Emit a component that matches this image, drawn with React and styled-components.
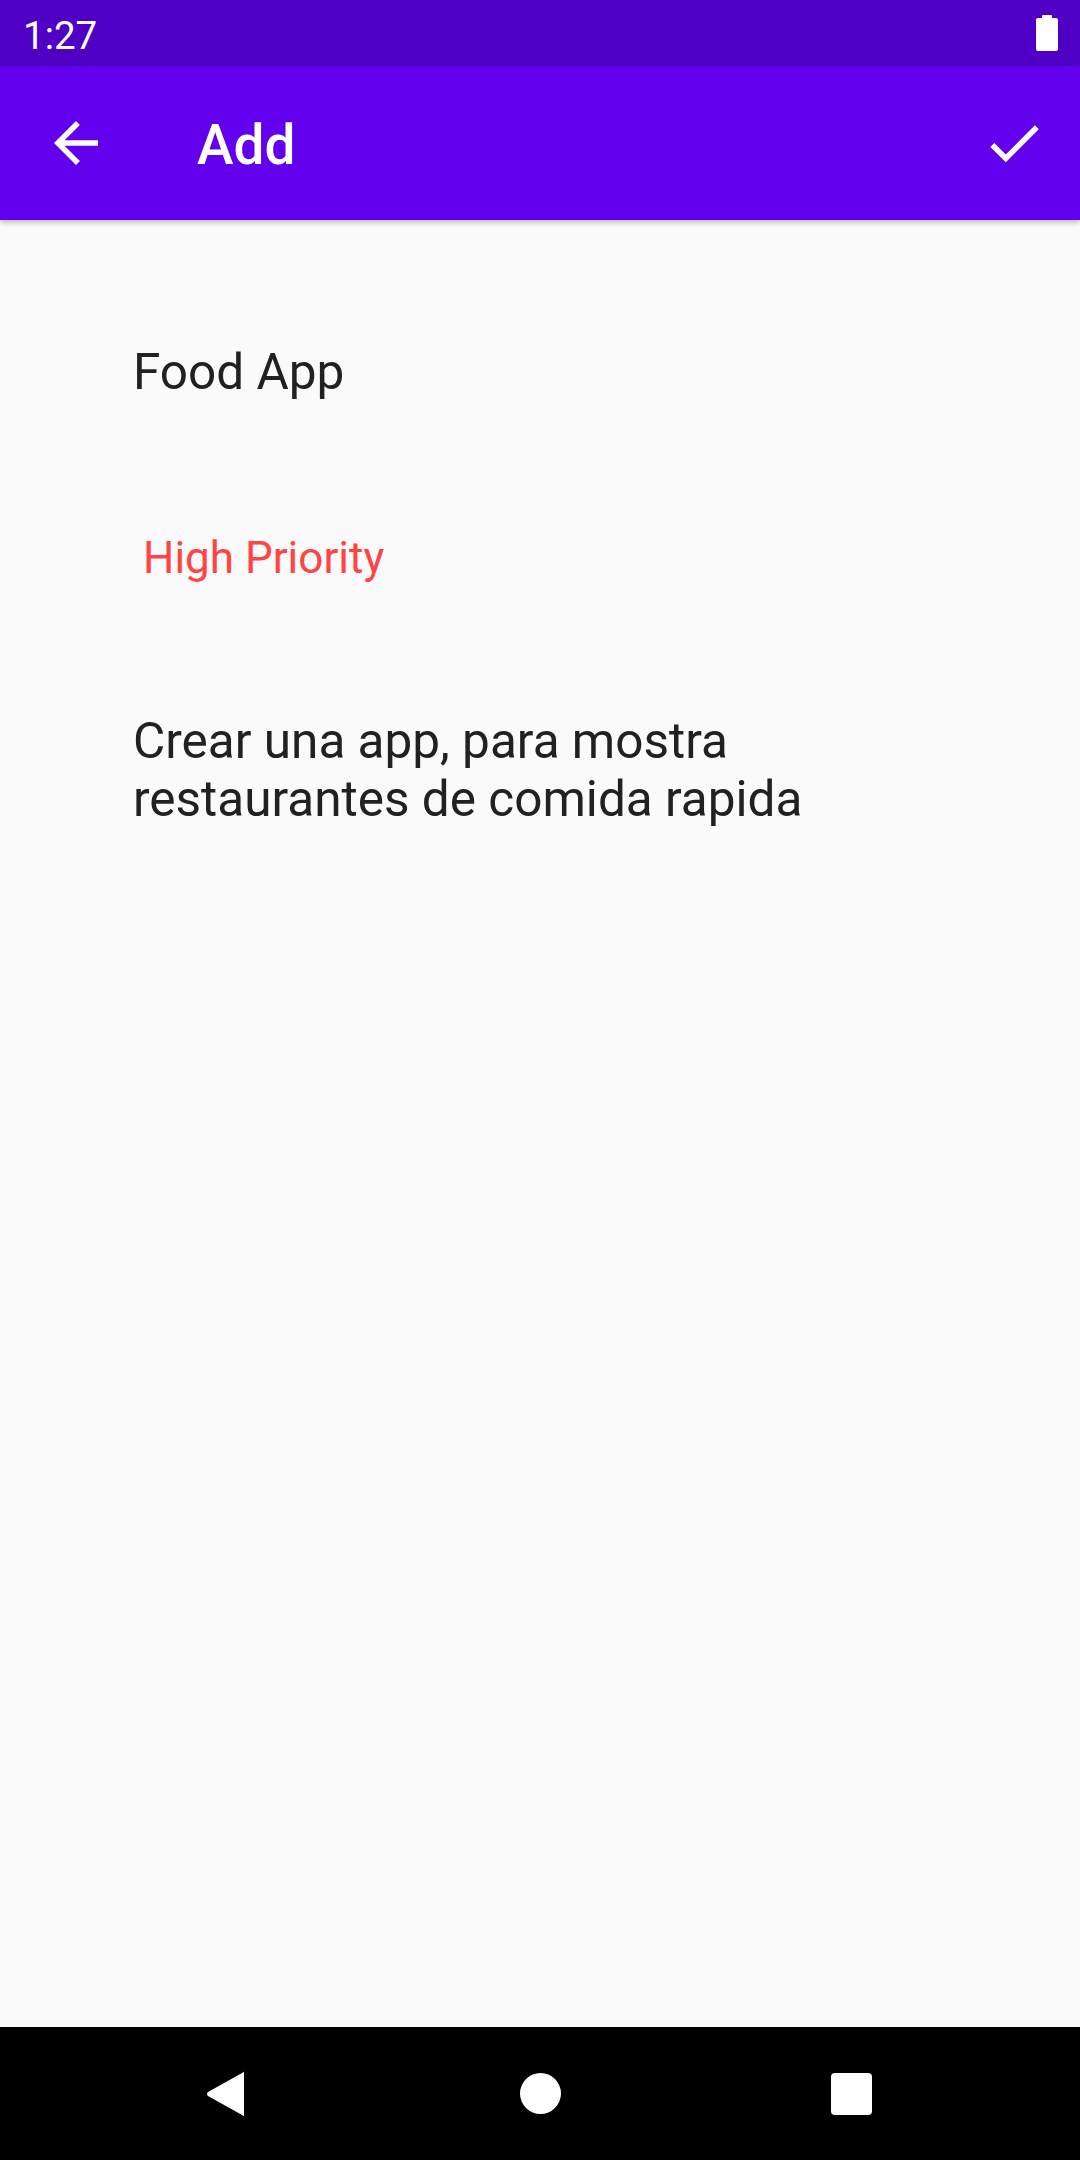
import React from 'react'
import styled, { createGlobalStyle } from 'styled-components'

const GlobalStyle = createGlobalStyle`
  html, body {
    margin: 0;
    padding: 0;
    background: #fafafa;
    font-family: Roboto, "Noto Sans", sans-serif;
  }
`;

const App = () => {
  return (
    <>
      <GlobalStyle />
      <StScreen>
        <StStatusBar>
          <StClock>1:27</StClock>
          <svg width="22" height="36" viewBox="0 0 22 36">
            <rect x="6" y="0" width="10" height="4" rx="1" fill="#fff" />
            <rect x="0" y="3" width="22" height="33" rx="2" fill="#fff" />
          </svg>
        </StStatusBar>

        <StAppBar>
          <StIconButton>
            <svg width="66" height="66" viewBox="0 0 24 24">
              <path fill="#fff" d="M20 11H7.83l5.59-5.59L12 4l-8 8 8 8 1.41-1.41L7.83 13H20v-2z" />
            </svg>
          </StIconButton>
          <StTitle>Add</StTitle>
          <StIconButton>
            <svg width="66" height="66" viewBox="0 0 24 24">
              <path fill="#fff" d="M9 16.17L4.83 12l-1.42 1.41L9 19 21 7l-1.41-1.41z" />
            </svg>
          </StIconButton>
        </StAppBar>

        <StContent>
          <StField>Food App</StField>
          <StPriority>High Priority</StPriority>
          <StField $top={3}>
            Crear una app, para mostra
            <br />
            restaurantes de comida rapida
          </StField>
        </StContent>

        <StNavBar>
          <svg width="40" height="46" viewBox="0 0 40 46">
            <path fill="#fff" d="M38 1.5 L38 44.5 Q38 46 36.5 44.3 L2 25 Q0 23 2 21 L36.5 1.7 Q38 0 38 1.5 Z" />
          </svg>
          <StHomeDot />
          <StRecents />
        </StNavBar>
      </StScreen>
    </>
  )
}

export default App

const StScreen = styled.div`
  width: 1080px;
  height: 2160px;
  display: flex;
  flex-direction: column;
  background: #fafafa;
  overflow: hidden;
`;

const StStatusBar = styled.div`
  height: 66px;
  flex-shrink: 0;
  background: #5000c5;
  display: flex;
  align-items: center;
  justify-content: space-between;
  padding: 0 22px 0 23px;
  box-sizing: border-box;
`;

const StClock = styled.span`
  color: #fff;
  font-size: 38.5px;
  line-height: 45px;
  padding-top: 4px;
`;

const StAppBar = styled.div`
  height: 154px;
  flex-shrink: 0;
  background: #6200ee;
  display: flex;
  align-items: center;
  padding: 0 33px 0 43px;
  box-sizing: border-box;
  box-shadow: 0 3px 5px rgba(0, 0, 0, 0.22);
  position: relative;
  z-index: 1;
`;

const StIconButton = styled.div`
  width: 66px;
  height: 66px;
  display: flex;
  align-items: center;
  justify-content: center;
`;

const StTitle = styled.h1`
  flex: 1;
  margin: 0 0 0 88px;
  color: #fff;
  font-size: 55px;
  font-weight: 500;
  line-height: 64px;
  padding-top: 4px;
`;

const StContent = styled.div`
  flex: 1;
  display: flex;
  flex-direction: column;
  align-items: flex-start;
  padding: 123px 0 0 133px;
  gap: 131px;
`;

const StField = styled.div`
  color: #212121;
  font-size: 49.5px;
  line-height: 58px;
  margin-top: ${props => props.$top || 0}px;
`;

const StPriority = styled.div`
  color: #ff4444;
  font-size: 44px;
  line-height: 52px;
  margin-left: 10px;
  margin-bottom: -6px;
`;

const StNavBar = styled.div`
  height: 133px;
  flex-shrink: 0;
  background: #000;
  display: flex;
  align-items: center;
  justify-content: space-between;
  padding: 0 208px 0 206px;
  box-sizing: border-box;
`;

const StHomeDot = styled.div`
  width: 41px;
  height: 41px;
  border-radius: 50%;
  background: #fff;
  margin-left: 4px;
`;

const StRecents = styled.div`
  width: 41px;
  height: 42px;
  border-radius: 4px;
  background: #fff;
`;
